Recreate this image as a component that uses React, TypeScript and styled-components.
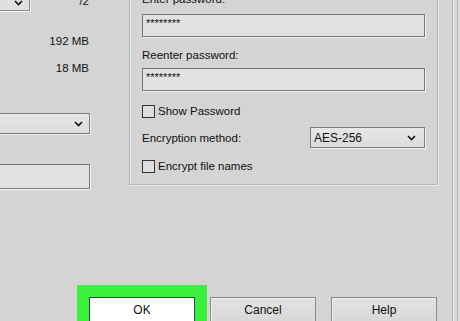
import styled, { createGlobalStyle } from "styled-components";

const GlobalStyle = createGlobalStyle`
  html, body {
    margin: 0;
    padding: 0;
    background: #d4d4d4;
  }
  body {
    font-family: "Liberation Sans", Arial, sans-serif;
    font-size: 11.5px;
    color: #111;
  }
`;

function Chevron() {
  return (
    <svg width="9" height="6" viewBox="0 0 9 6">
      <path d="M1 1 L4.5 4.5 L8 1" fill="none" stroke="#111" strokeWidth="1.6" />
    </svg>
  );
}

export default function App() {
  return (
    <Page>
      <GlobalStyle />
      <Dialog>
        <Main>
          <LeftCol>
            <TopRow>
              <SmallSelect>
                <Chevron />
              </SmallSelect>
              <PageCount>/2</PageCount>
            </TopRow>
            <SizeText gap={22}>192 MB</SizeText>
            <SizeText gap={11}>18 MB</SizeText>
            <WideSelect>
              <Chevron />
            </WideSelect>
            <WideInput />
          </LeftCol>

          <GroupBox>
            <Label>Enter password:</Label>
            <Field gap={7}>********</Field>
            <Label gap={10}>Reenter password:</Label>
            <Field gap={5}>********</Field>
            <CheckRow gap={13}>
              <CheckBox />
              <span>Show Password</span>
            </CheckRow>
            <MethodRow>
              <span>Encryption method:</span>
              <Select>
                <span>AES-256</span>
                <Chevron />
              </Select>
            </MethodRow>
            <CheckRow gap={11}>
              <CheckBox />
              <span>Encrypt file names</span>
            </CheckRow>
          </GroupBox>
        </Main>

        <ButtonRow>
          <Button primary>OK</Button>
          <Button>Cancel</Button>
          <Button>Help</Button>
        </ButtonRow>
      </Dialog>
      <Edge />
    </Page>
  );
}

const Page = styled.div`
  width: 460px;
  height: 321px;
  overflow: hidden;
  display: flex;
  background: #d4d4d4;
`;

const Dialog = styled.div`
  width: 452px;
  height: 100%;
  display: flex;
  flex-direction: column;
`;

const Edge = styled.div`
  flex: 1;
  border-left: 1px solid #b4b4b4;
  box-shadow: inset 1px 0 0 #ececec, inset 4px 0 0 #d8d8d8, inset 5px 0 0 #bcbcbc;
  background: #d9d9d9;
`;

const Main = styled.div`
  display: flex;
  align-items: flex-start;
`;

const LeftCol = styled.div`
  width: 129px;
  margin-top: -12px;
  padding-right: 40px;
  box-sizing: border-box;
  display: flex;
  flex-direction: column;
  align-items: flex-end;
`;

const TopRow = styled.div`
  align-self: stretch;
  height: 23px;
  display: flex;
  align-items: flex-end;
  justify-content: space-between;
`;

const SmallSelect = styled.div`
  width: 60px;
  height: 23px;
  margin-left: -30px;
  box-sizing: border-box;
  border: 1px solid #8a8a8a;
  box-shadow: 1px 1px 0 #f2f2f2;
  background: #e0e0e0;
  display: flex;
  align-items: center;
  justify-content: flex-end;
  padding: 6px 6px 0 0;
`;

const PageCount = styled.span`
  line-height: 14px;
  padding-bottom: 3px;
`;

const SizeText = styled.div<{ gap: number }>`
  margin-top: ${(p) => p.gap}px;
  line-height: 16px;
`;

const WideSelect = styled.div`
  margin-top: 37px;
  margin-right: -1px;
  width: 120px;
  height: 21px;
  box-sizing: border-box;
  border: 1px solid #7c7c7c;
  box-shadow: 1px 1px 0 #f0f0f0;
  background: linear-gradient(#e6e6e6, #dcdcdc);
  display: flex;
  align-items: center;
  justify-content: flex-end;
  padding-right: 6px;
`;

const WideInput = styled.div`
  margin-top: 30px;
  margin-right: -1px;
  width: 120px;
  height: 25px;
  box-sizing: border-box;
  border: 1px solid #7a7a7a;
  box-shadow: 1px 1px 0 #f4f4f4;
  background: #e2e2e2;
`;

const GroupBox = styled.div`
  width: 309px;
  margin-top: -30px;
  padding: 20px 12px 11px 12px;
  box-sizing: border-box;
  border: 1px solid #b9b9b9;
  box-shadow: inset 1px 1px 0 #e9e9e9, 1px 1px 0 #e9e9e9;
  display: flex;
  flex-direction: column;
`;

const Label = styled.div<{ gap?: number }>`
  margin-top: ${(p) => p.gap ?? 0}px;
  line-height: 16px;
`;

const Field = styled.div<{ gap: number }>`
  margin-top: ${(p) => p.gap}px;
  width: 283px;
  height: 23px;
  box-sizing: border-box;
  border: 1px solid #767676;
  box-shadow: 1px 1px 0 #f4f4f4;
  background: #e2e2e2;
  padding: 2px 3px;
  font-size: 11px;
  line-height: 12px;
`;

const CheckRow = styled.div<{ gap: number }>`
  margin-top: ${(p) => p.gap}px;
  height: 14px;
  display: flex;
  align-items: center;
  gap: 3px;
`;

const CheckBox = styled.span`
  width: 13px;
  height: 13px;
  box-sizing: border-box;
  border: 1px solid #333;
  background: #dedede;
`;

const MethodRow = styled.div`
  margin-top: 9px;
  width: 283px;
  display: flex;
  align-items: center;
  justify-content: space-between;
`;

const Select = styled.div`
  width: 115px;
  height: 21px;
  box-sizing: border-box;
  border: 1px solid #7e7e7e;
  box-shadow: 1px 1px 0 #f0f0f0;
  background: linear-gradient(#e8e8e8, #dadada);
  display: flex;
  align-items: center;
  justify-content: space-between;
  padding: 0 8px 0 3px;
  font-size: 12px;
`;

const ButtonRow = styled.div`
  margin-top: auto;
  margin-bottom: -2px;
  padding-left: 89px;
  display: flex;
  gap: 15px;
`;

const Button = styled.div<{ primary?: boolean }>`
  width: 106px;
  height: 26px;
  box-sizing: border-box;
  display: flex;
  align-items: center;
  justify-content: center;
  font-size: 12px;
  border: 1px solid ${(p) => (p.primary ? "#2c4256" : "#8a8a8a")};
  background: ${(p) => (p.primary ? "#ffffff" : "linear-gradient(#e2e2e2, #d8d8d8)")};
  box-shadow: ${(p) =>
    p.primary ? "0 0 0 12px #3bf03b" : "inset 1px 1px 0 #f0f0f0"};
`;
